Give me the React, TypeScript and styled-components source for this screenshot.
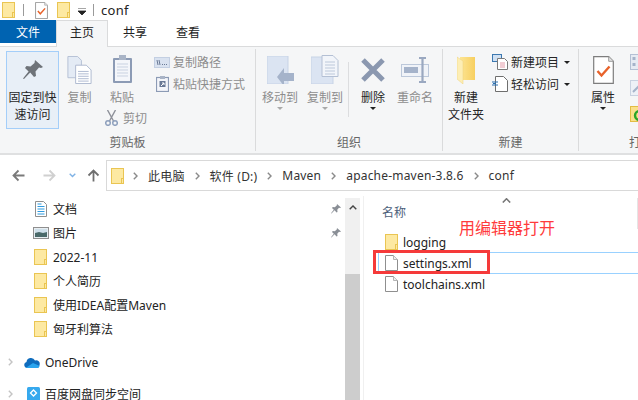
import { Fragment } from "react"
import styled, { createGlobalStyle } from "styled-components"

const GlobalStyle = createGlobalStyle`
  html, body { margin: 0; padding: 0; background: #fff; }
  body { font-family: "Noto Sans", "Noto Sans CJK SC", sans-serif; font-size: 12px; color: #1a1a1a; }
  svg { flex: none; display: block; }
`

const Window = styled.div`
  width: 638px;
  height: 400px;
  overflow: hidden;
  display: flex;
  flex-direction: column;
  background: #fff;
`
const Spacer = styled.span<{ $w: number }>`
  width: ${(p) => p.$w}px;
  flex: none;
`

// 제목 표시줄
const TitleBar = styled.div`
  height: 20px;
  display: flex;
  align-items: center;
  padding-left: 2px;
  flex: none;
`
const TitleSep = styled.span<{ $left: number; $right: number }>`
  width: 1px;
  height: 12px;
  background: #9a9a9a;
  margin: 0 ${(p) => p.$right}px 0 ${(p) => p.$left}px;
`
const TitleText = styled.span`
  font-size: 13px;
  line-height: 18px;
  color: #222;
  letter-spacing: 0.3px;
`
const QuickCaret = styled.svg`
  margin: 2px 7px 0 8px;
`

// 탭
const TabRow = styled.div`
  height: 26px;
  display: flex;
  flex: none;
  position: relative;
  z-index: 1;
`
const FileTab = styled.div`
  width: 56px;
  height: 23px;
  background: #0063b1;
  color: #fff;
  display: flex;
  align-items: center;
  justify-content: center;
  font-size: 12px;
`
const Tab = styled.div<{ $active?: boolean; $width: number }>`
  width: ${(p) => p.$width}px;
  height: ${(p) => (p.$active ? 27 : 23)}px;
  box-sizing: border-box;
  display: flex;
  align-items: center;
  justify-content: center;
  padding-bottom: ${(p) => (p.$active ? 4 : 0)}px;
  font-size: 12px;
  color: #222;
  background: ${(p) => (p.$active ? "#f5f6f7" : "transparent")};
  border: ${(p) => (p.$active ? "1px solid #dadbdc" : "none")};
  border-bottom: none;
`

// 리본
const Ribbon = styled.div`
  height: 109px;
  flex: none;
  box-sizing: border-box;
  display: flex;
  background: #f5f6f7;
  border-top: 1px solid #dadbdc;
  border-bottom: 2px solid #dfe0e1;
  padding-top: 2px;
  overflow: hidden;
`
const Group = styled.div<{ $width: number; $flat?: boolean }>`
  width: ${(p) => p.$width}px;
  flex: none;
  box-sizing: border-box;
  height: 102px;
  border-right: ${(p) => (p.$flat ? "none" : "1px solid #dadbdc")};
  display: flex;
  flex-direction: column;
`
const GroupBody = styled.div<{ $padLeft?: number }>`
  height: 83px;
  padding-top: 2px;
  padding-left: ${(p) => p.$padLeft ?? 0}px;
  display: flex;
`
const GroupLabel = styled.div`
  height: 17px;
  line-height: 17px;
  text-align: center;
  font-size: 12px;
  color: #666;
  white-space: nowrap;
`
const BigButton = styled.div<{ $width: number; $active?: boolean; $disabled?: boolean }>`
  width: ${(p) => p.$width}px;
  height: 78px;
  box-sizing: border-box;
  flex: none;
  display: flex;
  flex-direction: column;
  align-items: center;
  font-size: 12px;
  line-height: 17px;
  text-align: center;
  white-space: nowrap;
  color: ${(p) => (p.$disabled ? "#8d8d8d" : "#262626")};
  background: ${(p) => (p.$active ? "#e8eff7" : "transparent")};
  border: 1px solid ${(p) => (p.$active ? "#a4cef9" : "transparent")};
`
const BigIcon = styled.div`
  height: 37px;
  box-sizing: border-box;
  padding-bottom: 2px;
  flex: none;
  display: flex;
  align-items: center;
  justify-content: center;
`
const PasteColumn = styled.div`
  width: 44px;
  flex: none;
  display: flex;
  flex-direction: column;
`
const CutRow = styled.div`
  display: flex;
  align-items: center;
  gap: 5px;
  height: 18px;
  margin: -20px 0 0 5px;
  white-space: nowrap;
  color: #8d8d8d;
  font-size: 12px;
`
const SmallColumn = styled.div<{ $left: number }>`
  margin-left: ${(p) => p.$left}px;
  padding-top: 2px;
  display: flex;
  flex-direction: column;
  gap: 4px;
`
const SmallItem = styled.div<{ $disabled?: boolean }>`
  height: 18px;
  display: flex;
  align-items: center;
  gap: 3px;
  white-space: nowrap;
  font-size: 12px;
  color: ${(p) => (p.$disabled ? "#8d8d8d" : "#262626")};
`
const SmallIconSlot = styled.span`
  width: 16px;
  flex: none;
  display: flex;
  justify-content: center;
`
const Caret = styled.i<{ $grey?: boolean; $left?: number; $top?: number }>`
  display: block;
  width: 0;
  height: 0;
  flex: none;
  margin-left: ${(p) => p.$left ?? 0}px;
  margin-top: ${(p) => p.$top ?? 0}px;
  border-left: 3px solid transparent;
  border-right: 3px solid transparent;
  border-top: 3px solid ${(p) => (p.$grey ? "#a9a9a9" : "#222")};
`
const VSep = styled.div`
  width: 1px;
  height: 55px;
  margin: 11px 0 0 2px;
  background: #dcdddf;
  flex: none;
`
const OpenIcons = styled.div`
  margin-left: 3px;
  padding-top: 3px;
  display: flex;
  flex-direction: column;
  gap: 10px;
`

// 주소 표시줄
const AddressRow = styled.div`
  height: 41px;
  flex: none;
  box-sizing: border-box;
  padding: 5px 0 5px 12px;
  display: flex;
  align-items: center;
`
const NavIcons = styled.div`
  width: 94px;
  flex: none;
  display: flex;
  align-items: center;
`
const AddressBox = styled.div`
  flex: 1;
  height: 31px;
  box-sizing: border-box;
  border: 1px solid #d9d9d9;
  border-right: none;
  display: flex;
  align-items: center;
  padding-left: 4px;
  font-size: 12px;
  letter-spacing: 0.2px;
  color: #333;
  white-space: nowrap;
`
const Crumb = styled.span`
  margin: 0 10px;
`
const ArrowSvg = styled.svg<{ $rot: number }>`
  transform: rotate(${(p) => p.$rot}deg);
`

// 본문
const Main = styled.div`
  flex: 1;
  min-height: 0;
  display: flex;
`
const NavPane = styled.div`
  width: 345px;
  flex: none;
  padding-top: 1px;
  font-size: 12px;
`
const NavRow = styled.div`
  height: 24px;
  display: flex;
  align-items: center;
  padding-left: 34px;
  gap: 6px;
  white-space: nowrap;
  color: #222;
`
const NavIconSlot = styled.span`
  width: 13px;
  flex: none;
  display: flex;
  justify-content: center;
`
const NavLabel = styled.span`
  flex: 1;
`
const PinSlot = styled.span`
  width: 14px;
  flex: none;
  display: flex;
`
const NavRootRow = styled.div<{ $top: number }>`
  height: 24px;
  margin-top: ${(p) => p.$top}px;
  display: flex;
  align-items: center;
  padding-left: 8px;
  gap: 2px;
  white-space: nowrap;
  color: #222;
`
const IconSlot = styled.span`
  width: 26px;
  flex: none;
  display: flex;
  justify-content: flex-end;
  padding-right: 1px;
  margin-right: 2px;
  box-sizing: border-box;
`
const ScrollBar = styled.div`
  width: 15px;
  flex: none;
  margin-top: 2px;
  background: #f0f0f0;
  display: flex;
  flex-direction: column;
`
const ScrollArrow = styled.div`
  height: 76px;
  display: flex;
  justify-content: center;
  padding-top: 7px;
  box-sizing: border-box;
`
const ScrollThumb = styled.div`
  flex: 1;
  background: #cdcdcd;
`
const Content = styled.div`
  flex: 1;
  position: relative;
  margin-left: 3px;
  padding-top: 2px;
  border-left: 1px solid #f0f0f0;
  font-size: 12px;
`
const SortCaret = styled.div`
  position: absolute;
  left: 138px;
  top: 2px;
  display: flex;
`
const HeaderCell = styled.div`
  height: 31px;
  box-sizing: border-box;
  padding: 6px 0 0 18px;
  color: #4c607a;
  line-height: 17px;
  border-right: 1px solid #e5e5e5;
`
const FileList = styled.div`
  display: flex;
  flex-direction: column;
  padding-left: 14px;
  margin-top: 2px;
`
const FileRow = styled.div<{ $selected?: boolean }>`
  height: 22px;
  margin-bottom: -1px;
  box-sizing: border-box;
  display: flex;
  align-items: center;
  padding-left: 6px;
  gap: 5px;
  color: #222;
  border: 1px solid ${(p) => (p.$selected ? "#99d1ff" : "transparent")};
  border-right: none;
`
const Annotation = styled.div`
  position: absolute;
  left: 95px;
  top: 21px;
  font-size: 16px;
  line-height: 22px;
  color: #ff3b3b;
  white-space: nowrap;
`
const RedBox = styled.div`
  position: absolute;
  left: 9px;
  top: 54px;
  width: 117px;
  height: 24px;
  box-sizing: border-box;
  border: 3px solid #f53a3a;
`

// 아이콘들
const FolderFlat = () => (
  <svg width="13" height="16" viewBox="0 0 13 16">
    <rect x="0.5" y="0.5" width="12" height="15" fill="#fde9a2" stroke="#eac552" />
    <rect x="10" y="10" width="3" height="6" fill="#eac552" />
    <rect x="11" y="11" width="1" height="4" fill="#fde9a2" />
  </svg>
)
const FileIcon = () => (
  <svg width="13" height="16" viewBox="0 0 13 16">
    <path d="M.5.5h8l4 4v11H.5z" fill="#fff" stroke="#8f8f8f" />
    <path d="M8.5.5v4h4" fill="#f0f0f0" stroke="#b5b5b5" />
  </svg>
)
const CheckDoc = ({ w = 13, h = 17 }: { w?: number; h?: number }) => (
  <svg width={w} height={h} viewBox="0 0 21 28">
    <path d="M.7.7h15l4.6 4.6v22H.7z" fill="#fff" stroke="#7d7d7d" strokeWidth="1.2" />
    <path d="M15.7.7v4.6h4.6" fill="#e4e4e4" stroke="#9a9a9a" />
    <path d="M4.5 15l4 4.5 8-9" fill="none" stroke="#e8622a" strokeWidth="2.4" />
  </svg>
)
const Pin = ({ size = 20, color = "#6e7379" }: { size?: number; color?: string }) => (
  <svg width={size} height={size} viewBox="0 0 20 20">
    <path d="M12 0l8 7-2 1-2-.5-3.500 4L13 16l-2 1-3.800-4.400L1 19l-1-.5 5.600-6.900L2 8l1.500-2 4 .5 4-3.600z" fill={color} />
  </svg>
)
const CopyIcon = () => (
  <svg width="25" height="28" viewBox="0 0 25 29">
    <path d="M.5.5h10l4 4v18H.5z" fill="#e4ebf5" stroke="#b4c0d4" />
    <path d="M8.500 9.500h11l5 5v14h-16z" fill="#fff" stroke="#aebad0" />
    <path d="M11 16h11M11 18.500h11M11 21h11M11 23.500h11M11 26h11" stroke="#aebad0" />
  </svg>
)
const PasteIcon = () => (
  <svg width="21" height="29" viewBox="0 0 21 29">
    <rect x="1" y="3" width="19" height="25" rx="1" fill="#8c9bb5" />
    <rect x="3" y="5" width="15" height="21" fill="#f4f6fa" />
    <path d="M5 9h11M5 12h11M5 15h11M5 18h11M5 21h11" stroke="#c9d2e1" />
    <rect x="7" y="0" width="7" height="5" fill="#a9b4c6" />
  </svg>
)
const CutIcon = () => (
  <svg width="13" height="16" viewBox="0 0 13 16">
    <path d="M2.500 0l6 11M10.500 0l-6 11" stroke="#8d9099" strokeWidth="1.400" />
    <circle cx="3" cy="13" r="2.300" fill="none" stroke="#8ea0bd" strokeWidth="1.500" />
    <circle cx="10" cy="13" r="2.300" fill="none" stroke="#8ea0bd" strokeWidth="1.500" />
  </svg>
)
const PathIcon = () => (
  <svg width="16" height="11" viewBox="0 0 16 11">
    <rect x="0.500" y="0.500" width="15" height="10" fill="#d9e2f0" stroke="#c3cfe2" />
    <path d="M3 3l1 5M5 3l1 5M8 7.500h1M10 7.500h1M12 7.500h1" stroke="#6a7a96" />
  </svg>
)
const ShortcutIcon = () => (
  <svg width="13" height="16" viewBox="0 0 13 16">
    <rect x="0.500" y="1.500" width="12" height="14" fill="#f4f6fa" stroke="#8c9bb5" strokeWidth="1.200" />
    <rect x="4" y="0" width="5" height="3" fill="#a9b4c6" />
    <rect x="3.500" y="5" width="6" height="6" fill="#6a7a96" />
    <path d="M5 10l3-3M6 7h2v2" stroke="#fff" fill="none" />
  </svg>
)
const MoveIcon = () => (
  <svg width="27" height="28" viewBox="0 0 27 28">
    <rect x="0" y="0" width="21" height="28" fill="#dbe4f2" stroke="#c7d3e6" />
    <path d="M17 17h10v8H17v5l-7-9 7-9z" fill="#a5b3ca" />
  </svg>
)
const CopyToIcon = () => (
  <svg width="28" height="29" viewBox="0 0 28 29">
    <rect x="0" y="2" width="22" height="27" fill="#dbe4f2" stroke="#c7d3e6" />
    <path d="M11 .5h11l5 5v16H11z" fill="#f2f5fa" stroke="#b4c0d4" />
    <path d="M14 7h10M14 10h10M14 13h10M14 16h10M14 19h10" stroke="#bcc8da" />
  </svg>
)
const DeleteIcon = () => (
  <svg width="26" height="26" viewBox="0 0 26 26">
    <path d="M3 3l20 20M23 3L3 23" stroke="#8b98b0" strokeWidth="5" />
  </svg>
)
const RenameIcon = () => (
  <svg width="28" height="26" viewBox="0 0 28 26">
    <rect x="0.500" y="7.500" width="27" height="12" fill="#f0f3f8" stroke="#bcc8da" />
    <rect x="3" y="10" width="14" height="6" fill="#a5b3ca" />
    <path d="M18 1h7M18 25h7M21.500 1v24" stroke="#9aa8c0" strokeWidth="2.200" />
  </svg>
)
const NewFolderIcon = () => (
  <svg width="19" height="28" viewBox="0 0 19 28">
    <defs>
      <linearGradient id="nf" x1="0" y1="0" x2="1" y2="0">
        <stop offset="0" stopColor="#fde594" />
        <stop offset="1" stopColor="#f7cf60" />
      </linearGradient>
    </defs>
    <rect x="3" y="1" width="15" height="23" fill="url(#nf)" />
    <path d="M0 1l6 4v23l-6-5z" fill="#fdeeb5" stroke="#efd27a" strokeWidth="0.500" />
  </svg>
)
const NewItemIcon = () => (
  <svg width="16" height="16" viewBox="0 0 16 16">
    <rect x="0.500" y="0.500" width="9" height="7" fill="#cfe0f2" stroke="#3c78b0" />
    <path d="M5.500 4.500h7l3 3v8h-10z" fill="#fff" stroke="#7a7a7a" />
    <path d="M8 9h5M8 11h5M8 13h5" stroke="#e39aa8" />
  </svg>
)
const EasyAccessIcon = () => (
  <svg width="16" height="16" viewBox="0 0 16 16">
    <path d="M3.500.5h8l4 4v11h-12z" fill="#fff" stroke="#6e6e6e" />
    <path d="M0 6h6M0 9h6M1 7.500h3" stroke="#2a6fb0" />
  </svg>
)
const Arrow = ({ rot, color }: { rot: number; color: string }) => (
  <ArrowSvg $rot={rot} width="13" height="13" viewBox="0 0 13 13">
    <path d="M12.500 6.500H1.500M6.500 1.500l-5 5 5 5" fill="none" stroke={color} strokeWidth="1.800" />
  </ArrowSvg>
)
const Chevron = ({ color = "#8a8a8a" }: { color?: string }) => (
  <svg width="5" height="8" viewBox="0 0 5 8">
    <path d="M.8.800L4 4 .8 7.200" fill="none" stroke={color} strokeWidth="1.400" />
  </svg>
)
const DocsIcon = () => (
  <svg width="12" height="16" viewBox="0 0 12 16">
    <path d="M.5.500h8l3 3v12H.5z" fill="#fff" stroke="#8f8f8f" />
    <path d="M2.500 3h4M2.500 5.500h7M2.500 8h7M2.500 10.500h7M2.500 13h7" stroke="#2f9be0" />
  </svg>
)
const PicturesIcon = () => (
  <svg width="16" height="12" viewBox="0 0 16 12">
    <rect x="0.500" y="0.500" width="15" height="11" fill="#e8eef2" stroke="#8f8f8f" />
    <rect x="2" y="2" width="12" height="4" fill="#cfe0ea" />
    <path d="M2 6l4-1 4 1 4-1v5H2z" fill="#4a6a6a" />
  </svg>
)
const CloudIcon = () => (
  <svg width="16" height="11" viewBox="0 0 16 11">
    <path d="M3 11a3 3 0 0 1-.5-5.900A4.500 4.500 0 0 1 11 3.500 3.500 3.500 0 0 1 15.500 8c0 1.800-1 3-2.500 3z" fill="#0f6cbd" />
    <path d="M3 11a3 3 0 0 1-1-.2L9 6l6.400 2.700c-.2 1.400-1.200 2.300-2.400 2.300z" fill="#2aa4ee" />
  </svg>
)
const BaiduIcon = () => (
  <svg width="13" height="14" viewBox="0 0 13 14">
    <rect width="13" height="14" rx="1.500" fill="#36a9ee" />
    <path d="M6.500 3l3 3-3 3-3-3z" fill="none" stroke="#fff" strokeWidth="1.300" />
  </svg>
)
const ChevronUp = ({ color, width }: { color: string; width: number }) => (
  <svg width={width} height="5" viewBox="0 0 9 5">
    <path d="M.8 4.500L4.500.8l3.700 3.700" fill="none" stroke={color} strokeWidth="1.600" />
  </svg>
)
const OpenA = () => (
  <svg width="16" height="16" viewBox="0 0 16 16">
    <rect x="0.500" y="0.500" width="15" height="15" fill="#e6ebf3" stroke="#b4c0d4" />
    <path d="M2.500 3h3v3h-3zM2.500 9h3v3h-3z" fill="#a5b3ca" />
  </svg>
)
const OpenB = () => (
  <svg width="16" height="16" viewBox="0 0 16 16">
    <rect x="0.500" y="0.500" width="15" height="15" fill="#edf1f7" stroke="#c9d2e1" />
    <path d="M3 12l8-8" stroke="#a5b3ca" strokeWidth="2" />
  </svg>
)
const OpenC = () => (
  <svg width="16" height="16" viewBox="0 0 16 16">
    <rect x="0.500" y="0.500" width="15" height="15" fill="#fbe08a" stroke="#e2bd45" />
    <path d="M14 9a4.500 4.500 0 1 0-4.500 5" fill="none" stroke="#2aa52a" strokeWidth="2.400" />
  </svg>
)

const pinnedFolders = ["2022-11", "个人简历", "使用IDEA配置Maven", "匈牙利算法"]
const crumbs = ["此电脑", "软件 (D:)", "Maven", "apache-maven-3.8.6", "conf"]

export default function App() {
  return (
    <Window>
      <GlobalStyle />
      <TitleBar>
        <FolderFlat />
        <TitleSep $left={8} $right={11} />
        <CheckDoc />
        <Spacer $w={9} />
        <FolderFlat />
        <QuickCaret width="8" height="7" viewBox="0 0 8 7">
          <path d="M0 0h8M0 3h8L4 7z" fill="#222" stroke="#222" strokeWidth="0.800" />
        </QuickCaret>
        <TitleSep $left={0} $right={7} />
        <TitleText>conf</TitleText>
      </TitleBar>

      <TabRow>
        <FileTab>文件</FileTab>
        <Tab $active $width={52}>主页</Tab>
        <Tab $width={54}>共享</Tab>
        <Tab $width={52}>查看</Tab>
      </TabRow>

      <Ribbon>
        <Group $width={256}>
          <GroupBody $padLeft={6}>
            <BigButton $width={53} $active>
              <BigIcon><Pin /></BigIcon>
              固定到快<br />速访问
            </BigButton>
            <BigButton $width={41} $disabled>
              <BigIcon><CopyIcon /></BigIcon>
              复制
            </BigButton>
            <PasteColumn>
              <BigButton $width={44} $disabled>
                <BigIcon><PasteIcon /></BigIcon>
                粘贴
              </BigButton>
              <CutRow><CutIcon />剪切</CutRow>
            </PasteColumn>
            <SmallColumn $left={10}>
              <SmallItem $disabled><SmallIconSlot><PathIcon /></SmallIconSlot>复制路径</SmallItem>
              <SmallItem $disabled><SmallIconSlot><ShortcutIcon /></SmallIconSlot>粘贴快捷方式</SmallItem>
            </SmallColumn>
          </GroupBody>
          <GroupLabel>剪贴板</GroupLabel>
        </Group>

        <Group $width={187}>
          <GroupBody>
            <BigButton $width={48} $disabled>
              <BigIcon><MoveIcon /></BigIcon>
              移动到
              <Caret $grey $top={1} />
            </BigButton>
            <BigButton $width={42} $disabled>
              <BigIcon><CopyToIcon /></BigIcon>
              复制到
              <Caret $grey $top={1} />
            </BigButton>
            <VSep />
            <BigButton $width={48}>
              <BigIcon><DeleteIcon /></BigIcon>
              删除
              <Caret $top={1} />
            </BigButton>
            <BigButton $width={36} $disabled>
              <BigIcon><RenameIcon /></BigIcon>
              重命名
            </BigButton>
          </GroupBody>
          <GroupLabel>组织</GroupLabel>
        </Group>

        <Group $width={136}>
          <GroupBody>
            <BigButton $width={46}>
              <BigIcon><NewFolderIcon /></BigIcon>
              新建<br />文件夹
            </BigButton>
            <SmallColumn $left={3}>
              <SmallItem><NewItemIcon />新建项目<Caret $left={2} /></SmallItem>
              <SmallItem><EasyAccessIcon />轻松访问<Caret $left={2} /></SmallItem>
            </SmallColumn>
          </GroupBody>
          <GroupLabel>新建</GroupLabel>
        </Group>

        <Group $width={124} $flat>
          <GroupBody>
            <BigButton $width={48}>
              <BigIcon><CheckDoc w={21} h={28} /></BigIcon>
              属性
              <Caret $top={1} />
            </BigButton>
            <OpenIcons>
              <OpenA />
              <OpenB />
              <OpenC />
            </OpenIcons>
          </GroupBody>
          <GroupLabel>打开</GroupLabel>
        </Group>
      </Ribbon>

      <AddressRow>
        <NavIcons>
          <Arrow rot={0} color="#7a7a7a" />
          <Spacer $w={18} />
          <Arrow rot={180} color="#d0d0d0" />
          <Spacer $w={13} />
          <svg width="7" height="5" viewBox="0 0 7 5">
            <path d="M.7.700L3.500 3.500 6.300.700" fill="none" stroke="#7fb2e5" strokeWidth="1.400" />
          </svg>
          <Spacer $w={11} />
          <Arrow rot={90} color="#6f6f6f" />
        </NavIcons>
        <AddressBox>
          <FolderFlat />
          <Spacer $w={9} />
          {crumbs.map((name) => (
            <Fragment key={name}>
              <Chevron />
              <Crumb>{name}</Crumb>
            </Fragment>
          ))}
        </AddressBox>
      </AddressRow>

      <Main>
        <NavPane>
          <NavRow>
            <NavIconSlot><DocsIcon /></NavIconSlot>
            <NavLabel>文档</NavLabel>
            <PinSlot><Pin size={10} color="#8a8f96" /></PinSlot>
          </NavRow>
          <NavRow>
            <NavIconSlot><PicturesIcon /></NavIconSlot>
            <NavLabel>图片</NavLabel>
            <PinSlot><Pin size={10} color="#8a8f96" /></PinSlot>
          </NavRow>
          {pinnedFolders.map((name) => (
            <NavRow key={name}>
              <NavIconSlot><FolderFlat /></NavIconSlot>
              <NavLabel>{name}</NavLabel>
            </NavRow>
          ))}
          <NavRootRow $top={9}>
            <Chevron color="#c4c4c4" />
            <IconSlot><CloudIcon /></IconSlot>
            OneDrive
          </NavRootRow>
          <NavRootRow $top={8}>
            <Chevron color="#c4c4c4" />
            <IconSlot><BaiduIcon /></IconSlot>
            百度网盘同步空间
          </NavRootRow>
        </NavPane>

        <ScrollBar>
          <ScrollArrow><ChevronUp color="#444" width={8} /></ScrollArrow>
          <ScrollThumb />
        </ScrollBar>

        <Content>
          <SortCaret><ChevronUp color="#777" width={9} /></SortCaret>
          <HeaderCell>名称</HeaderCell>
          <FileList>
            <FileRow><FolderFlat />logging</FileRow>
            <FileRow $selected><FileIcon />settings.xml</FileRow>
            <FileRow><FileIcon />toolchains.xml</FileRow>
          </FileList>
          <Annotation>用编辑器打开</Annotation>
          <RedBox />
        </Content>
      </Main>
    </Window>
  )
}
